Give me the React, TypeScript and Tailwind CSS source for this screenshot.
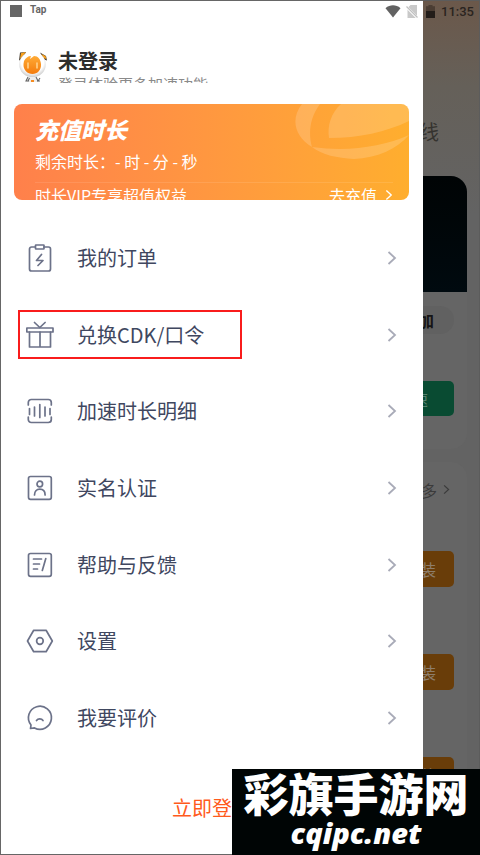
import React from 'react';

interface MenuItem {
  label: string;
  icon: React.ReactNode;
  highlighted?: boolean;
}

const LineIcon: React.FC<{ children: React.ReactNode }> = ({ children }) => (
  <svg
    viewBox="0 0 28 28"
    className="w-7 h-7 shrink-0"
    fill="none"
    stroke="#6c7289"
    strokeWidth="1.7"
    strokeLinecap="round"
    strokeLinejoin="round"
    aria-hidden="true"
  >
    {children}
  </svg>
);

const Chevron: React.FC<{ className: string }> = ({ className }) => (
  <svg viewBox="0 0 10 16" className={className} fill="none" stroke="currentColor" strokeWidth="1.8" aria-hidden="true">
    <path d="M1.5 2 8 8l-6.500 6" />
  </svg>
);

const menuItems: MenuItem[] = [
  {
    label: '我的订单',
    icon: (
      <LineIcon>
        <path d="M9 3H5.500a2 2 0 0 0-2 2v20a2 2 0 0 0 2 2h17a2 2 0 0 0 2-2V5a2 2 0 0 0-2-2H18" />
        <rect x="9.500" y="1" width="8.500" height="4" rx="0.500" />
        <path d="M15.500 10.500 10.500 16.500h6.500l-5 5" />
      </LineIcon>
    ),
  },
  {
    label: '兑换CDK/口令',
    highlighted: true,
    icon: (
      <LineIcon>
        <rect x="0.800" y="7" width="26.200" height="4" />
        <path d="M3.500 11v15h21V11M14 11v15M8.500 1.500l5.300 5 5.300-5" />
      </LineIcon>
    ),
  },
  {
    label: '加速时长明细',
    icon: (
      <LineIcon>
        <path d="M2.300 8V5.500a3 3 0 0 1 3-3h17a3 3 0 0 1 3 3V8M2.300 20v2.500a3 3 0 0 0 3 3h17a3 3 0 0 0 3-3V20" />
        <path d="M3.500 11.500v6M8.500 10v9M13.800 7.500v13M19 10v9M24 11.500v6" />
      </LineIcon>
    ),
  },
  {
    label: '实名认证',
    icon: (
      <LineIcon>
        <rect x="2.500" y="2.500" width="22.800" height="22.800" rx="2" />
        <circle cx="13.800" cy="10" r="2.800" />
        <path d="M8.500 21c0-3.500 2-5.800 5.300-5.800s5.300 2.300 5.300 5.800" />
      </LineIcon>
    ),
  },
  {
    label: '帮助与反馈',
    icon: (
      <LineIcon>
        <rect x="2.500" y="2.500" width="22.800" height="22.800" rx="2" />
        <path d="M7.500 8h8M7.500 13h6M7.500 18h4M19.800 7.500l-3.500 12" />
      </LineIcon>
    ),
  },
  {
    label: '设置',
    icon: (
      <LineIcon>
        <path d="M7.700 3.300h12.400L26.300 14l-6.200 10.700H7.700L1.500 14Z" />
        <circle cx="13.900" cy="14" r="3.300" />
      </LineIcon>
    ),
  },
  {
    label: '我要评价',
    icon: (
      <LineIcon>
        <path d="M5 21A11.500 11.500 0 1 1 8.500 23.900L4.500 24.500Z" />
        <path d="M10.500 16.500c1.500-2.300 5-2.300 6.500 0" />
      </LineIcon>
    ),
  },
];

const StatusBar: React.FC = () => (
  <div className="absolute inset-x-0 top-0 z-10 flex items-center h-[22px] pl-[10px] pr-1.5">
    <span className="w-3 h-3 bg-[#666666]" />
    <span className="ml-2 pb-0.5 font-[Roboto] text-[10px] leading-none font-bold text-[#666666]">Tap</span>
    <div className="ml-auto flex items-center">
      <svg viewBox="0 0 16 13" className="w-4 h-[13px]" fill="#626262" aria-hidden="true">
        <path d="M.5 3.200C5-.600 11-.600 15.500 3.200L8 12.500Z" />
      </svg>
      <svg viewBox="0 0 12 13" className="ml-[5px] w-3 h-[13px]" aria-hidden="true">
        <path d="M4.500 0H11v13H1.500V3Z" fill="#c9c9c9" />
        <path d="M0 1.500 11.500 13" stroke="#ffffff" strokeWidth="2.500" />
        <path d="M.5 1.500 11.500 12.500" stroke="#c0c0c0" strokeWidth="1.200" />
      </svg>
      <svg viewBox="0 0 9 13" className="ml-2 w-[9px] h-[13px]" aria-hidden="true">
        <path d="M2.500 0h4v1.200H9V6H0V1.200h2.500Z" fill="#4b3d33" />
        <path d="M0 6h9v7H0Z" fill="#231d19" />
      </svg>
      <span className="ml-1.5 font-[Roboto] text-[13px] leading-none font-medium text-[#2a2420]">11:35</span>
    </div>
  </div>
);

const Mascot: React.FC = () => (
  <svg viewBox="0 0 30 32" className="w-[30px] h-8 shrink-0" aria-hidden="true">
    <defs>
      <linearGradient id="mascotFace" x1="0" y1="0" x2="0" y2="1">
        <stop offset="0" stopColor="#ffab36" />
        <stop offset="1" stopColor="#f47b0c" />
      </linearGradient>
      <radialGradient id="mascotHead" cx="0.5" cy="0.4" r="0.6">
        <stop offset="0.7" stopColor="#ffffff" />
        <stop offset="1" stopColor="#c9c9c9" />
      </radialGradient>
    </defs>
    <path d="M1 9.500 2 1.500l6-.500-3 7Z" fill="#4a4034" />
    <path d="M2 8 3 2l5-1-4 5Z" fill="#f9a11d" />
    <path d="M29 9.500 28 5l-6-3.500 4 7Z" fill="#4a4034" />
    <path d="m28.500 8-1-3-4-2 2 4Z" fill="#f9a11d" />
    <ellipse cx="14.500" cy="13.500" rx="13.300" ry="12.800" fill="url(#mascotHead)" />
    <path d="M6 10c1.500-3 4-5 7-5l-1 3 4-3c4 0 6.500 3 7 8 .500 6-3.500 10-8.500 10S5 19 5.500 13Z" fill="url(#mascotFace)" />
    <path d="M10 12v5M19 12v5" stroke="#ffd18a" strokeWidth="1.600" strokeLinecap="round" />
    <path d="M10 26h9l2 5H8Z" fill="#ededed" />
    <path d="m10 26-2 4h2l1.500-3M18 26l2 4 2-3M8 30h3M19 30h3" stroke="#686868" strokeWidth="1.100" fill="none" />
    <path d="M13 29h3v2h-3Z" fill="#f58b20" />
  </svg>
);

const ProfileHeader: React.FC = () => (
  <div className="flex gap-[10px] h-[82px] pt-[50px] pl-[17px] overflow-hidden">
    <Mascot />
    <div>
      <h1 className="text-xl leading-5 font-bold text-[#2d2d2d]">未登录</h1>
      <p className="mt-[3px] text-[15px] leading-5 text-[#8a8a8a]">登录体验更多加速功能</p>
    </div>
  </div>
);

const RechargeCard: React.FC = () => (
  <section className="relative h-24 mt-[21px] ml-[13px] mr-[14px] rounded-lg overflow-hidden bg-linear-to-r from-[#ff804b] to-[#ffae2e] text-white">
    <svg viewBox="0 0 116 56" className="absolute top-0 right-0 w-[116px] h-14" fill="#ffffff" fillOpacity="0.17" aria-hidden="true">
      <path d="M9 0H27C17 13 15 29 19 43C2 33-3 15 9 0Z" />
      <path d="M48 0H116V17C93 28 66 34 36 34C34 22 38 9 48 0Z" />
      <path d="M19 43C55 48 89 43 116 31C104 45 84 54 61 55C44 54 29 51 19 43Z" />
    </svg>
    <div className="relative pl-[21px] pr-4 pt-[11px]">
      <h2 className="text-[23px] leading-7 font-black italic">充值时长</h2>
      <p className="mt-2 text-base leading-5">剩余时长：- 时 - 分 - 秒</p>
      <div className="mt-[11px] flex items-center justify-between border-t border-white/10 text-base leading-6">
        <span>时长VIP专享超值权益</span>
        <a href="#recharge" className="flex items-center gap-2">
          去充值
          <Chevron className="w-2 h-3" />
        </a>
      </div>
    </div>
  </section>
);

const Drawer: React.FC = () => (
  <aside className="flex flex-1 min-w-0 flex-col border-y border-l border-[#666666] bg-white">
    <ProfileHeader />
    <RechargeCard />
    <nav className="grid flex-1 auto-rows-fr mt-5">
      {menuItems.map((item) => (
        <a key={item.label} href="#menu" className="flex items-center justify-between pl-[17px] pr-[26px]">
          <span
            className={`flex items-center gap-[23px] w-56 h-[49px] pl-1.5 border-2 ${
              item.highlighted ? 'border-[#f91c1c]' : 'border-transparent'
            }`}
          >
            {item.icon}
            <span className="text-xl leading-7 text-[#40475f] whitespace-nowrap">{item.label}</span>
          </span>
          <Chevron className="w-[10px] h-4 text-[#a9abb8]" />
        </a>
      ))}
    </nav>
    <div className="flex justify-center pt-[38px] pb-8">
      <button type="button" className="text-xl leading-7 text-[#ff5a1c]">立即登录</button>
    </div>
  </aside>
);

// Right edge of the home page, dimmed by the open drawer
const DimmedHome: React.FC = () => (
  <div className="flex w-[57px] shrink-0 justify-end overflow-hidden border border-l-0 border-[#5c5c5c] bg-linear-to-b from-[#6b584a] via-[#656059] via-10% to-[#636363] to-25%">
    <div className="flex w-36 shrink-0 flex-col pr-3">
      <div className="h-[175px] pt-[115px] pr-7 text-right text-xl leading-8 text-[#35332f]">线</div>
      <section className="flex flex-col items-end h-[273px] rounded-2xl overflow-hidden bg-[#656565]">
        <div className="w-full h-[116px] bg-linear-to-b from-[#000405] to-[#000a0f]" />
        <div className="w-24 h-7 mt-[14px] mr-[13px] pr-5 rounded-full bg-[#616161] text-right text-base leading-7 font-bold text-[#151515]">加</div>
        <button type="button" className="w-24 h-[35px] mt-[47px] mr-[13px] pr-[26px] rounded-[5px] bg-[#094b32] text-right text-base leading-8 text-[#568370]">速</button>
      </section>
      <section className="flex flex-1 flex-col items-end mt-[13px] pr-[13px] rounded-t-2xl bg-[#656565]">
        <div className="flex items-center gap-1.5 h-[55px] pr-1 text-base text-[#3b3b3b]">
          多
          <Chevron className="w-[7px] h-[11px]" />
        </div>
        <div className="flex w-24 flex-col gap-[67px] mt-[34px]">
          {[0, 1, 2].map((row) => (
            <button key={row} type="button" className="h-9 pr-[18px] rounded-[5px] bg-[#693d09] text-right text-base leading-8 text-[#8d7d6b]">
              装
            </button>
          ))}
        </div>
      </section>
    </div>
  </div>
);

const Watermark: React.FC = () => (
  <div className="absolute right-0 bottom-0 z-20 flex w-[248px] h-[86px] flex-col items-center bg-[#000505] text-white">
    <span className="text-[45px] leading-[48px] font-black whitespace-nowrap">彩旗手游网</span>
    <span className="font-['Open_Sans'] text-[29px] leading-8 font-extrabold italic">cqipc.net</span>
  </div>
);

const App: React.FC = () => {
  return (
    <div className="relative flex min-h-screen overflow-hidden font-['Noto_Sans_CJK_SC','Noto_Sans',sans-serif]">
      <StatusBar />
      <Drawer />
      <DimmedHome />
      <Watermark />
    </div>
  );
};

export default App;
